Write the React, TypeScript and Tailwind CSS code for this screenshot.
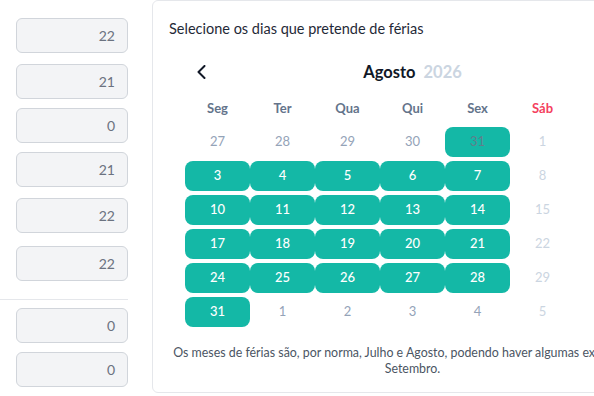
import React from "react";

type Day = { n: number; kind: "sel" | "selOut" | "out" | "wknd" };

const weekdays = ["Seg", "Ter", "Qua", "Qui", "Sex", "Sáb", "Dom"];

const rows: Day[][] = [
  [
    { n: 27, kind: "out" },
    { n: 28, kind: "out" },
    { n: 29, kind: "out" },
    { n: 30, kind: "out" },
    { n: 31, kind: "selOut" },
    { n: 1, kind: "wknd" },
    { n: 2, kind: "wknd" },
  ],
  ...[3, 10, 17, 24].map((start) =>
    Array.from({ length: 7 }, (_, i) => ({
      n: start + i,
      kind: (i < 5 ? "sel" : "wknd") as Day["kind"],
    }))
  ),
  [
    { n: 31, kind: "sel" },
    { n: 1, kind: "out" },
    { n: 2, kind: "out" },
    { n: 3, kind: "out" },
    { n: 4, kind: "out" },
    { n: 5, kind: "wknd" },
    { n: 6, kind: "wknd" },
  ],
];

function dayClass(kind: Day["kind"]): string {
  switch (kind) {
    case "sel":
      return "bg-[#14b8a6] text-white font-medium rounded-lg";
    case "selOut":
      return "bg-[#14b8a6] text-[#5f7f8c] rounded-lg";
    case "out":
      return "text-[#94a3b8]";
    default:
      return "text-[#cbd5e1]";
  }
}

function ValueBox({ value, className = "" }: { value: number; className?: string }) {
  return (
    <div
      className={`ml-4 flex h-[35px] w-[112px] items-center justify-end rounded-md border border-[#d1d5db] bg-[#f3f4f6] pr-3 text-[14px] text-[#6b7280] ${className}`}
    >
      {value}
    </div>
  );
}

export default function App() {
  return (
    <div
      className="flex h-[396px] w-[594px] overflow-hidden bg-white"
      style={{ fontFamily: "Lato, 'Open Sans', sans-serif" }}
    >
      {/* left values */}
      <div className="flex w-[128px] shrink-0 flex-col">
        <ValueBox value={22} className="mt-[18px]" />
        <ValueBox value={21} className="mt-[11px]" />
        <ValueBox value={0} className="mt-[9px]" />
        <ValueBox value={21} className="mt-[9px]" />
        <ValueBox value={22} className="mt-[11px]" />
        <ValueBox value={22} className="mt-[13px]" />
        <div className="mt-[18px] h-px w-[128px] bg-[#e5e7eb]" />
        <ValueBox value={0} className="mt-[8px]" />
        <ValueBox value={0} className="mt-[9px]" />
      </div>

      {/* calendar card */}
      <div className="ml-6 h-[393px] w-[521px] shrink-0 overflow-hidden rounded-md border border-[#e5e7eb] px-4 pt-[18px]">
        <h2 className="text-[14.5px] leading-5 text-[#1f2937]">
          Selecione os dias que pretende de férias
        </h2>

        <div className="mx-4 mt-[21px]">
          <div className="flex h-6 items-center justify-between px-2">
            <button className="flex h-6 w-4 items-center justify-center text-[#111827]">
              <svg width="9" height="14" viewBox="0 0 9 14" fill="none">
                <path d="M7.5 1 L1.5 7 L7.5 13" stroke="currentColor" strokeWidth="2" strokeLinecap="round" strokeLinejoin="round" />
              </svg>
            </button>
            <div className="flex items-baseline gap-2 text-[16.5px] font-bold">
              <span className="text-[#111827]">Agosto</span>
              <span className="text-[#cbd5e1]">2026</span>
            </div>
            <button className="flex h-6 w-4 items-center justify-center text-[#111827]">
              <svg width="9" height="14" viewBox="0 0 9 14" fill="none">
                <path d="M1.5 1 L7.5 7 L1.5 13" stroke="currentColor" strokeWidth="2" strokeLinecap="round" strokeLinejoin="round" />
              </svg>
            </button>
          </div>

          <div className="mt-[10px] grid h-[30px] grid-cols-[repeat(7,65px)] items-center text-center text-[13px] font-bold">
            {weekdays.map((d) => (
              <span key={d} className={d === "Sáb" || d === "Dom" ? "text-[#f43f5e]" : "text-[#64748b]"}>
                {d}
              </span>
            ))}
          </div>

          <div className="mt-[3px] flex flex-col gap-1">
            {rows.map((row, ri) => (
              <div key={ri} className="grid grid-cols-[repeat(7,65px)]">
                {row.map((d, di) => (
                  <div
                    key={di}
                    className={`flex h-[30px] items-center justify-center text-[13px] ${dayClass(d.kind)}`}
                  >
                    {d.n}
                  </div>
                ))}
              </div>
            ))}
          </div>
        </div>

        <p className="mt-[18px] text-center text-[12.4px] leading-4 text-[#4b5563]">
          Os meses de férias são, por norma, Julho e Agosto, podendo haver algumas exceções em
          Setembro.
        </p>
      </div>
    </div>
  );
}
